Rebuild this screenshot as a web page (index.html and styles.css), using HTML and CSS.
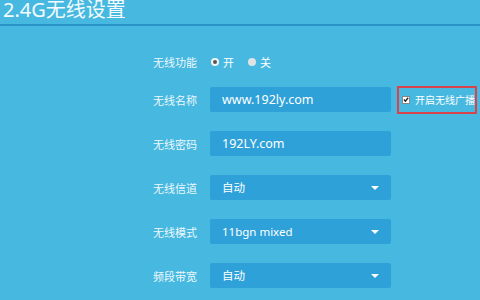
FILE: index.html
```html
<!DOCTYPE html>
<html>
  <head>
    <meta charset="utf-8" />
    <meta name="viewport" content="width=device-width, initial-scale=1" />
    <link rel="stylesheet" href="styles.css">
  </head>
  <body>
    <div class="header">
      <h1>2.4G无线设置</h1>
    </div>
    <form class="wifi-form">
      <div class="row row-switch">
        <label class="label">无线功能</label>
        <div class="radios">
          <span class="radio checked"></span><span class="radio-text">开</span>
          <span class="radio"></span><span class="radio-text">关</span>
        </div>
      </div>

      <div class="row">
        <label class="label">无线名称</label>
        <div class="field">www.192ly.com</div>
        <div class="broadcast">
          <span class="check">
            <svg width="7" height="7" viewBox="0 0 7 7"><path d="M1 3.6 L2.8 5.4 L6 1.4" fill="none" stroke="#222" stroke-width="1.6"/></svg>
          </span>
          <span class="broadcast-text">开启无线广播</span>
        </div>
      </div>

      <div class="row">
        <label class="label">无线密码</label>
        <div class="field">192LY.com</div>
      </div>

      <div class="row">
        <label class="label">无线信道</label>
        <div class="field select">自动<span class="arrow"></span></div>
      </div>

      <div class="row">
        <label class="label">无线模式</label>
        <div class="field select">11bgn mixed<span class="arrow"></span></div>
      </div>

      <div class="row">
        <label class="label">频段带宽</label>
        <div class="field select">自动<span class="arrow"></span></div>
      </div>
    </form>
  </body>
</html>
```

FILE: styles.css
```css
* {
  box-sizing: border-box;
}
body {
  margin: 0;
  width: 480px;
  height: 300px;
  overflow: hidden;
  background-color: #47b9e1;
  font-family: "Noto Sans", "Noto Sans CJK SC", sans-serif;
  color: #fff;
}

.header {
  border-bottom: 2px solid #2b92c9;
  margin-top: -4px;
}
.header h1 {
  margin: 0;
  padding-left: 3px;
  font-size: 20px;
  font-weight: normal;
  line-height: 28px;
  color: #f4fbfe;
}

.wifi-form {
  padding-top: 27px;
  padding-left: 153px;
}
.row {
  display: flex;
  align-items: center;
  height: 25px;
  margin-bottom: 19px;
}
.row-switch {
  height: 18px;
  margin-bottom: 16px;
}
.label {
  width: 57px;
  font-size: 11px;
  color: rgba(255, 255, 255, 0.92);
}

.radios {
  display: flex;
  align-items: center;
  padding-left: 1px;
}
.radio {
  width: 8px;
  height: 8px;
  border-radius: 50%;
  background-color: #dfe3e6;
  display: flex;
  align-items: center;
  justify-content: center;
}
.radio.checked {
  background-color: #f4f4f4;
}
.radio.checked::after {
  content: "";
  width: 4px;
  height: 4px;
  border-radius: 50%;
  background-color: #555;
}
.radio-text {
  font-size: 11px;
  margin-left: 4px;
  margin-right: 14px;
}

.field {
  width: 181px;
  height: 25px;
  padding-left: 12px;
  background-color: #2ea1d9;
  border-radius: 2px;
  font-size: 12.5px;
  line-height: 25px;
  color: #fff;
}
.select {
  display: flex;
  justify-content: space-between;
  align-items: center;
  padding-right: 12px;
  font-size: 11.5px;
}
.arrow {
  width: 0;
  height: 0;
  border-left: 4px solid transparent;
  border-right: 4px solid transparent;
  border-top: 4px solid #fff;
}

.broadcast {
  display: flex;
  align-items: center;
  margin-left: 6px;
  width: 80px;
  height: 28px;
  border: 2px solid #d8434c;
  padding-left: 3px;
}
.check {
  width: 8px;
  height: 8px;
  background-color: #fff;
  border: 1px solid #888;
  display: flex;
  align-items: center;
  justify-content: center;
}
.broadcast-text {
  font-size: 10px;
  margin-left: 5px;
  white-space: nowrap;
}
```
